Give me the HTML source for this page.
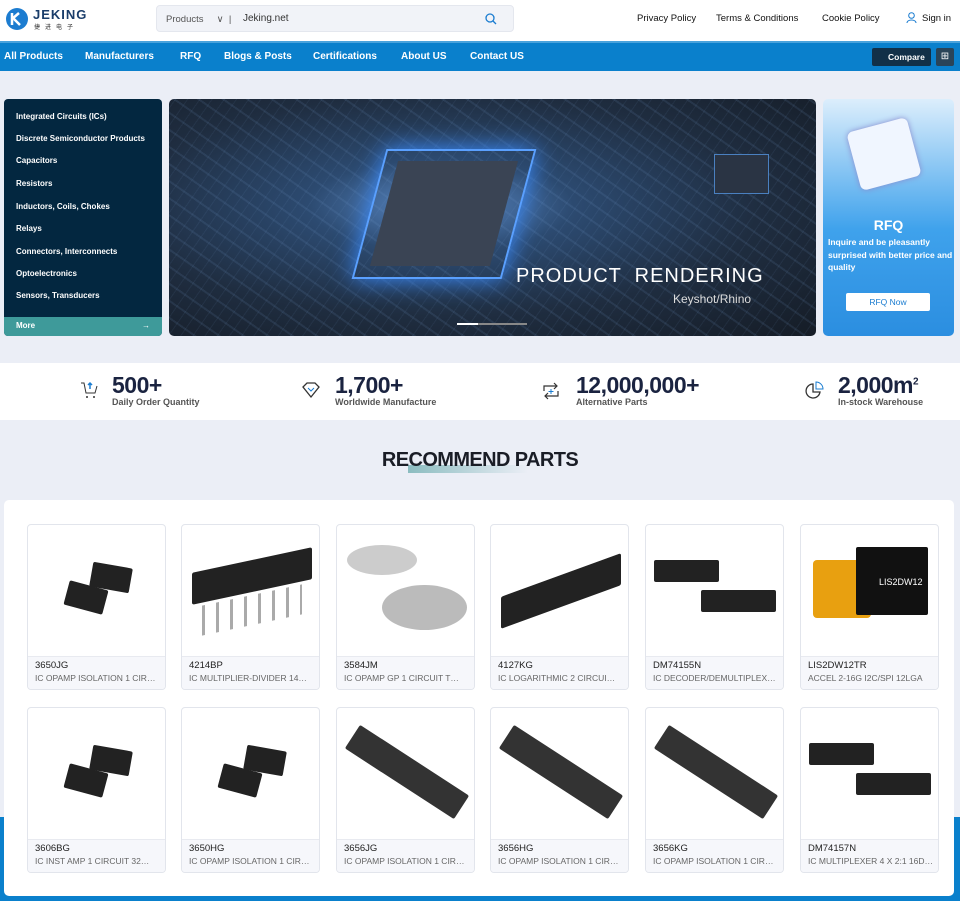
<!DOCTYPE html>
<html><head><meta charset="utf-8"><style>
*{box-sizing:border-box;margin:0;padding:0}
body{width:960px;height:901px;overflow:hidden;background:#ebeef6;font-family:"Liberation Sans",sans-serif;position:relative}
.top{position:absolute;left:0;top:0;width:960px;height:41px;background:#fff}
.nav{position:absolute;top:41px;left:0;width:960px;height:30px;background:#0a80cc;border-top:2px solid #4aa3dc}
.nav span{position:absolute;top:8px;color:#fff;font-size:10px;font-weight:bold}
.side{position:absolute;left:4px;top:99px;width:158px;height:237px;background:#032740;border-radius:4px;overflow:hidden}
.side div{color:#fff;font-size:8px;font-weight:bold;position:absolute;left:12px}
.card{position:absolute;width:139px;height:166px;background:#fff;border:1px solid #e2e5ec;border-radius:4px;overflow:hidden}
.card .t{position:absolute;left:0;top:131px;width:100%;height:35px;background:#f6f7fb;border-top:1px solid #e8eaf0;padding:3px 7px}
.card b{display:block;font-size:9.5px;color:#222;font-weight:normal}
.card i{display:block;font-style:normal;font-size:8.5px;color:#666;white-space:nowrap;margin-top:2px}
.chip{position:absolute;background:#222;border-radius:2px}
.stat{position:absolute;top:372px}
.stat .n{font-size:23px;font-weight:bold;color:#1a2340;letter-spacing:-0.5px}
.stat .l{font-size:9px;font-weight:bold;color:#555;margin-top:-2px}
</style></head><body>
<div class="top">
 <svg style="position:absolute;left:5px;top:7px" width="24" height="24"><circle cx="12" cy="12" r="11" fill="#1c7cd0"/><path d="M7 6v12M7 12l7-6M9 12l6 6" stroke="#fff" stroke-width="2.5" fill="none"/></svg>
 <div style="position:absolute;left:33px;top:7px;font-size:13px;font-weight:bold;color:#1a3d6a;letter-spacing:1px">JEKING</div>
 <div style="position:absolute;left:34px;top:22px;font-size:6px;color:#333;letter-spacing:5px;font-family:'Noto Sans CJK SC',sans-serif">捷进电子</div>
 <div style="position:absolute;left:156px;top:5px;width:358px;height:27px;background:#f1f3f8;border:1px solid #e4e7ee;border-radius:4px">
  <span style="position:absolute;left:9px;top:8px;font-size:9.5px;color:#555">Products &nbsp;&nbsp;&nbsp;&nbsp;∨ &nbsp;|</span>
  <span style="position:absolute;left:86px;top:7px;font-size:10px;color:#333">Jeking.net</span>
  <svg style="position:absolute;left:328px;top:7px" width="12" height="12"><circle cx="5" cy="5" r="4" stroke="#1a7cd0" fill="none" stroke-width="1.3"/><path d="M8 8l3 3" stroke="#1a7cd0" stroke-width="1.3"/></svg>
 </div>
 <span style="position:absolute;left:637px;top:13px;font-size:9.5px;color:#111">Privacy Policy</span>
 <span style="position:absolute;left:716px;top:13px;font-size:9.5px;color:#111">Terms &amp; Conditions</span>
 <span style="position:absolute;left:822px;top:13px;font-size:9.5px;color:#111">Cookie Policy</span>
 <svg style="position:absolute;left:906px;top:12px" width="11" height="11"><circle cx="5.5" cy="3.5" r="2.8" stroke="#1a7cd0" fill="none"/><path d="M1 11c0-4 9-4 9 0" stroke="#1a7cd0" fill="none"/></svg>
 <span style="position:absolute;left:922px;top:13px;font-size:9.5px;color:#111">Sign in</span>
</div>
<div class="nav">
 <span style="left:4px">All Products</span><span style="left:85px">Manufacturers</span><span style="left:180px">RFQ</span><span style="left:224px">Blogs &amp; Posts</span><span style="left:313px">Certifications</span><span style="left:401px">About US</span><span style="left:470px">Contact US</span>
 <div style="position:absolute;left:872px;top:5px;width:59px;height:18px;background:#123048;border-radius:2px;color:#fff;font-size:8.5px;font-weight:bold;padding:4px 0 0 16px">Compare</div>
 <div style="position:absolute;left:936px;top:5px;width:18px;height:18px;background:#2a4458;border-radius:2px;color:#fff;font-size:10px;text-align:center;line-height:18px">⊞</div>
</div>
<div class="side">
 <div style="top:13px">Integrated Circuits (ICs)</div><div style="top:35px">Discrete Semiconductor Products</div><div style="top:57px">Capacitors</div><div style="top:80px">Resistors</div><div style="top:103px">Inductors, Coils, Chokes</div><div style="top:125px">Relays</div><div style="top:148px">Connectors, Interconnects</div><div style="top:170px">Optoelectronics</div><div style="top:192px">Sensors, Transducers</div>
 <div style="left:0;top:218px;width:158px;height:19px;background:#3e9a9a;padding:4px 12px">More<span style="position:absolute;right:12px">→</span></div>
</div>
<div style="position:absolute;left:169px;top:99px;width:647px;height:237px;border-radius:5px;overflow:hidden;background:radial-gradient(ellipse at 42% 45%,#5a8ac8 0%,#2c4a70 25%,#1f2d40 60%,#151c26 100%)">
 <div style="position:absolute;inset:0;background:repeating-linear-gradient(35deg,rgba(120,160,210,.12) 0 2px,transparent 2px 14px),repeating-linear-gradient(-55deg,rgba(120,160,210,.08) 0 1px,transparent 1px 10px)"></div>
 <div style="position:absolute;left:200px;top:50px;width:150px;height:130px;border:2px solid #5aa0ff;transform:skewX(-15deg);box-shadow:0 0 24px #3a8cff"></div>
 <div style="position:absolute;left:215px;top:62px;width:120px;height:105px;background:#3a4454;transform:skewX(-15deg)"></div>
 <div style="position:absolute;left:545px;top:55px;width:55px;height:40px;background:#2a3444;border:1px solid #4a80c0"></div>
 <div style="position:absolute;left:347px;top:166px;color:#fff;font-size:20px;letter-spacing:1px">PRODUCT &nbsp;RENDERING</div>
 <div style="position:absolute;left:504px;top:193px;color:#ddd;font-size:12px">Keyshot/Rhino</div>
 <div style="position:absolute;left:288px;top:224px;width:70px;height:2px;background:linear-gradient(90deg,#fff 30%,#888 30%)"></div>
</div>
<div style="position:absolute;left:823px;top:99px;width:131px;height:237px;border-radius:5px;background:linear-gradient(#dceefc,#3fa2ec 55%,#2b8ee0)">
 <div style="position:absolute;left:30px;top:25px;width:62px;height:60px;background:#f0f6ff;border-radius:6px;transform:rotate(-15deg);box-shadow:0 0 6px #88c"></div>
 <div style="position:absolute;left:0;width:100%;top:118px;text-align:center;color:#fff;font-weight:bold;font-size:14px">RFQ</div>
 <div style="position:absolute;left:5px;top:137px;color:#fff;font-weight:bold;font-size:8.5px;line-height:12.5px">Inquire and be pleasantly surprised with better price and quality</div>
 <div style="position:absolute;left:23px;top:194px;width:84px;height:18px;background:#fff;border-radius:2px;color:#1a7cd0;font-size:8.5px;text-align:center;line-height:18px">RFQ Now</div>
</div>
<div style="position:absolute;left:0;top:363px;width:960px;height:57px;background:#fff"></div>
<svg style="position:absolute;left:80px;top:380px" width="18" height="20"><path d="M1 3h3l2 10h9l2-7" stroke="#333" fill="none"/><path d="M10 3v6M8 5l2-2 2 2" stroke="#1a7cd0" fill="none" stroke-width="1.5"/><circle cx="7" cy="17" r="1" fill="#333"/><circle cx="14" cy="17" r="1" fill="#333"/></svg>
<div class="stat" style="left:112px"><div class="n">500+</div><div class="l">Daily Order Quantity</div></div>
<svg style="position:absolute;left:301px;top:381px" width="20" height="18"><path d="M2 6l4-4h8l4 4-8 10z" stroke="#333" fill="none" stroke-width="1.3"/><path d="M7 7l3 3 3-3" stroke="#1a7cd0" fill="none"/></svg>
<div class="stat" style="left:335px"><div class="n">1,700+</div><div class="l">Worldwide Manufacture</div></div>
<svg style="position:absolute;left:541px;top:381px" width="20" height="20"><path d="M3 10V5h13M13 2l3 3-3 3M17 10v5H4M7 18l-3-3 3-3" stroke="#333" fill="none" stroke-width="1.2"/><path d="M10 8v5M7.5 10.5h5" stroke="#1a7cd0"/></svg>
<div class="stat" style="left:576px"><div class="n">12,000,000+</div><div class="l">Alternative Parts</div></div>
<svg style="position:absolute;left:804px;top:380px" width="20" height="20"><path d="M9 4a7 7 0 1 0 7 8H9z" stroke="#333" fill="none" stroke-width="1.3"/><path d="M12 2v7h7a7 7 0 0 0-7-7z" stroke="#1a7cd0" fill="none"/></svg>
<div class="stat" style="left:838px"><div class="n">2,000m<sup style="font-size:10px">2</sup></div><div class="l">In-stock Warehouse</div></div>
<div style="position:absolute;left:408px;top:465px;width:120px;height:8px;background:linear-gradient(90deg,#8bbcc0,rgba(200,220,225,0))"></div>
<div style="position:absolute;left:0;width:960px;top:449px;text-align:center;font-size:20px;font-weight:bold;color:#1a1d26;letter-spacing:-0.6px">RECOMMEND PARTS</div>
<div style="position:absolute;left:0;top:817px;width:960px;height:84px;background:#0a80cc"></div>
<div style="position:absolute;left:4px;top:500px;width:950px;height:396px;background:#fff;border-radius:5px"></div>

<div class="card" style="left:27px;top:524px"><div class="chip" style="left:38px;top:60px;width:40px;height:25px;transform:rotate(15deg)"></div><div class="chip" style="left:63px;top:40px;width:40px;height:25px;transform:rotate(10deg)"></div><div class="t"><b>3650JG</b><i>IC OPAMP ISOLATION 1 CIR…</i></div></div>
<div class="card" style="left:181px;top:524px"><div class="chip" style="left:10px;top:35px;width:120px;height:32px;transform:skewY(-12deg)"></div><div style="position:absolute;left:20px;top:70px;width:100px;height:30px;background:repeating-linear-gradient(90deg,#aaa 0 3px,transparent 3px 14px);transform:skewY(-12deg)"></div><div class="t"><b>4214BP</b><i>IC MULTIPLIER-DIVIDER 14…</i></div></div>
<div class="card" style="left:336px;top:524px"><div style="position:absolute;left:10px;top:20px;width:70px;height:30px;background:#ccc;border-radius:50%"></div><div style="position:absolute;left:45px;top:60px;width:85px;height:45px;background:#bbb;border-radius:50%"></div><div class="t"><b>3584JM</b><i>IC OPAMP GP 1 CIRCUIT T…</i></div></div>
<div class="card" style="left:490px;top:524px"><div class="chip" style="left:10px;top:50px;width:120px;height:32px;transform:skewY(-20deg)"></div><div class="t"><b>4127KG</b><i>IC LOGARITHMIC 2 CIRCUI…</i></div></div>
<div class="card" style="left:645px;top:524px"><div class="chip" style="left:8px;top:35px;width:65px;height:22px"></div><div class="chip" style="left:55px;top:65px;width:75px;height:22px"></div><div class="t"><b>DM74155N</b><i>IC DECODER/DEMULTIPLEX…</i></div></div>
<div class="card" style="left:800px;top:524px"><div style="position:absolute;left:12px;top:35px;width:58px;height:58px;background:#e8a010;border-radius:4px"></div><div class="chip" style="left:55px;top:22px;width:72px;height:68px;background:#111"></div><div style="position:absolute;left:78px;top:52px;color:#fff;font-size:9px">LIS2DW12</div><div class="t"><b>LIS2DW12TR</b><i>ACCEL 2-16G I2C/SPI 12LGA</i></div></div>

<div class="card" style="left:27px;top:707px"><div class="chip" style="left:38px;top:60px;width:40px;height:25px;transform:rotate(15deg)"></div><div class="chip" style="left:63px;top:40px;width:40px;height:25px;transform:rotate(10deg)"></div><div class="t"><b>3606BG</b><i>IC INST AMP 1 CIRCUIT 32…</i></div></div>
<div class="card" style="left:181px;top:707px"><div class="chip" style="left:38px;top:60px;width:40px;height:25px;transform:rotate(15deg)"></div><div class="chip" style="left:63px;top:40px;width:40px;height:25px;transform:rotate(10deg)"></div><div class="t"><b>3650HG</b><i>IC OPAMP ISOLATION 1 CIR…</i></div></div>
<div class="card" style="left:336px;top:707px"><div class="chip" style="left:5px;top:50px;width:130px;height:28px;transform:rotate(33deg);background:#333"></div><div class="t"><b>3656JG</b><i>IC OPAMP ISOLATION 1 CIR…</i></div></div>
<div class="card" style="left:490px;top:707px"><div class="chip" style="left:5px;top:50px;width:130px;height:28px;transform:rotate(33deg);background:#333"></div><div class="t"><b>3656HG</b><i>IC OPAMP ISOLATION 1 CIR…</i></div></div>
<div class="card" style="left:645px;top:707px"><div class="chip" style="left:5px;top:50px;width:130px;height:28px;transform:rotate(33deg);background:#333"></div><div class="t"><b>3656KG</b><i>IC OPAMP ISOLATION 1 CIR…</i></div></div>
<div class="card" style="left:800px;top:707px"><div class="chip" style="left:8px;top:35px;width:65px;height:22px"></div><div class="chip" style="left:55px;top:65px;width:75px;height:22px"></div><div class="t"><b>DM74157N</b><i>IC MULTIPLEXER 4 X 2:1 16D…</i></div></div>
</body></html>
